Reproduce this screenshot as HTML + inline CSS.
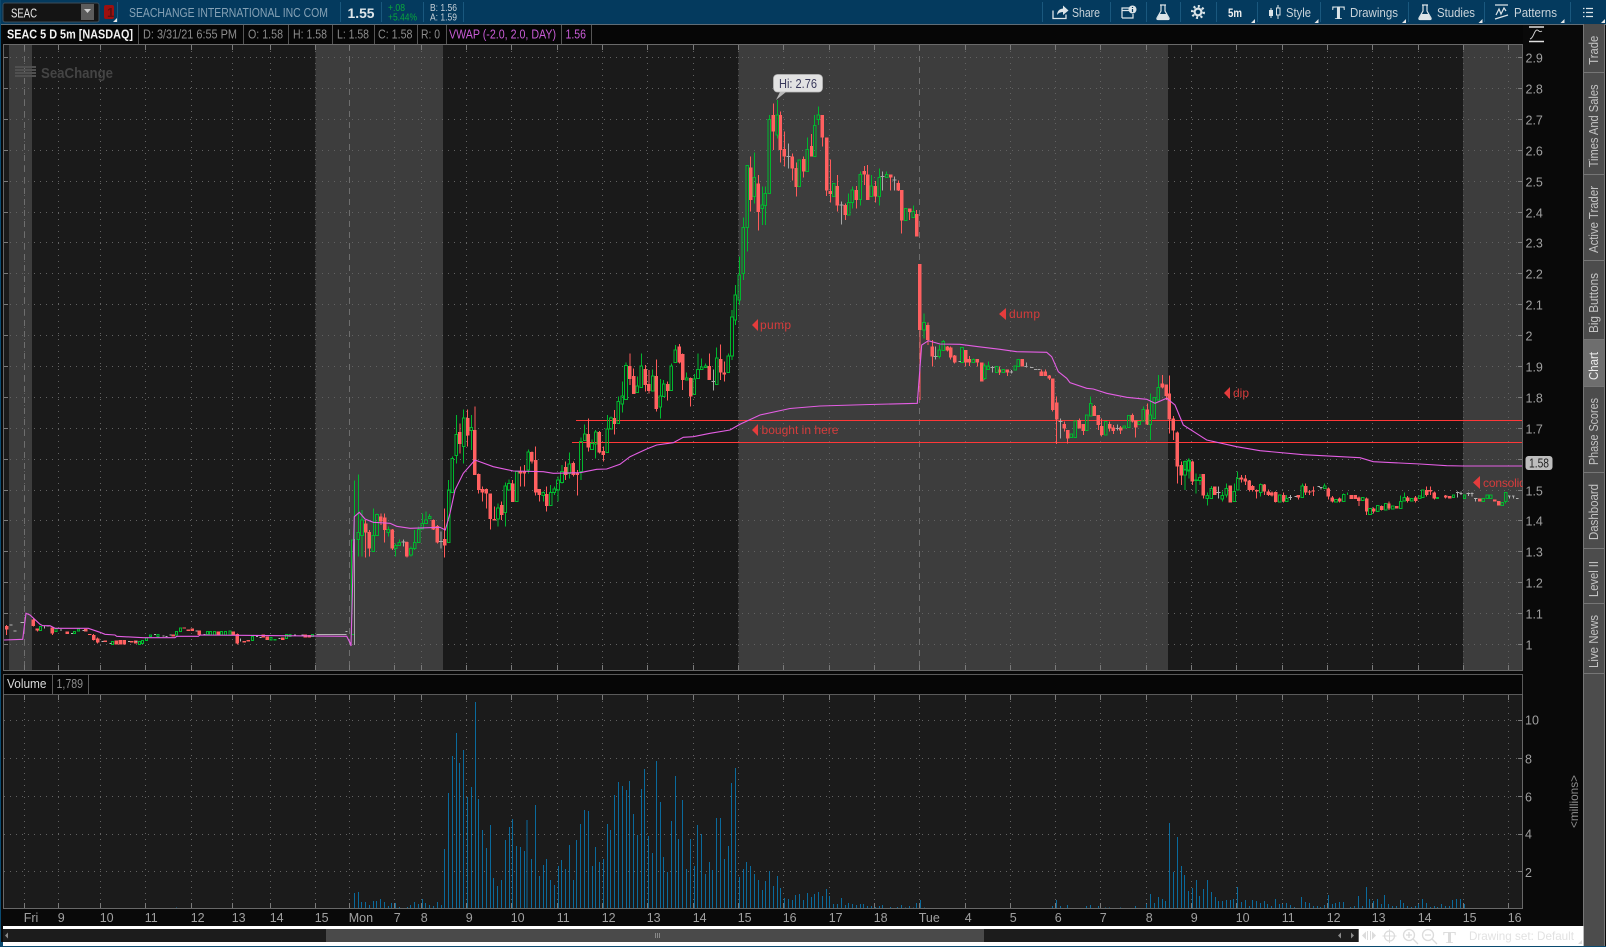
<!DOCTYPE html>
<html><head><meta charset="utf-8"><title>SEAC</title>
<style>
html,body{margin:0;padding:0;width:1606px;height:947px;overflow:hidden;background:#090909}
svg{display:block;position:absolute;left:0;top:0}
text{font-family:"Liberation Sans",sans-serif;font-size:12px}
.c{shape-rendering:crispEdges;fill:none}
.rw{stroke:#ff5a5a;stroke-width:3}.rb{stroke:#ff6060;stroke-width:10.5}
.gw{stroke:#00b82e;stroke-width:3}.ww{stroke:#b4b4b4;stroke-width:3}
.v{stroke:#0a6a9c;stroke-width:3;fill:none;shape-rendering:crispEdges}
.ax{fill:#a0a0a0;font-size:12.5px}.tb{fill:#c9d3da;font-size:12.5px}
.inf{fill:#8c8c8c;font-size:12.5px}.tab{fill:#c4c4c4;font-size:12.5px}
.an{fill:#d63c3c;font-size:12px}
</style></head><body>
<svg width="1606" height="947" viewBox="0 0 1606 947" xmlns="http://www.w3.org/2000/svg">
<defs><clipPath id="cp"><rect x="3" y="44" width="1519.5" height="626"/></clipPath></defs>
<rect width="1606" height="947" fill="#090909"/>
<!-- header -->
<rect width="1606" height="24" fill="#043a5e"/>
<rect y="24" width="1583" height="1" fill="#5f6d77"/>
<rect x="1583" y="24" width="23" height="1" fill="#5f6d77"/>
<rect x="0" y="0" width="1" height="947" fill="#0a4a70"/>
<rect x="3" y="3" width="96" height="19" rx="2" fill="#141414" stroke="#3c4c58"/>
<text x="11" y="17.5" textLength="26" lengthAdjust="spacingAndGlyphs" fill="#e8e8e8" style="font-size:13px">SEAC</text>
<rect x="81" y="4" width="13" height="16" fill="#5c5c5c"/>
<path d="M84 9h7l-3.500 4z" fill="#cfcfcf"/>
<rect x="104" y="5" width="10" height="14" rx="2" fill="#9c1010"/>
<text x="107" y="17" fill="#5c1010" style="font-size:13px;font-weight:bold">1</text>
<path d="M117 22l-4 0 4-4z" fill="#e8e8e8"/>
<path d="M117.500 2v20M340.500 2v20M381.500 2v20M423.500 2v20M463.500 2v20M1042.500 2v20M1110.500 2v20M1146.500 2v20M1180.500 2v20M1216.500 2v20M1257.500 2v20M1320.500 2v20M1408.500 2v20M1484.500 2v20M1570.500 2v20" stroke="#1a587e" class="c"/>
<text x="129" y="17" textLength="199" lengthAdjust="spacingAndGlyphs" fill="#86a2b6" style="font-size:12.500px">SEACHANGE INTERNATIONAL INC COM</text>
<text x="347.500" y="18" textLength="27" lengthAdjust="spacingAndGlyphs" fill="#dfe6ea" style="font-size:14px;font-weight:bold">1.55</text>
<text x="388" y="11" textLength="17" lengthAdjust="spacingAndGlyphs" fill="#0aa83c" style="font-size:10px">+.08</text>
<text x="388" y="20.500" textLength="29" lengthAdjust="spacingAndGlyphs" fill="#0aa83c" style="font-size:10.500px">+5.44%</text>
<text x="430" y="11" textLength="27" lengthAdjust="spacingAndGlyphs" fill="#c6d0d8" style="font-size:10px">B: 1.56</text>
<text x="430" y="20.500" textLength="27" lengthAdjust="spacingAndGlyphs" fill="#c6d0d8" style="font-size:10.500px">A: 1.59</text>
<!-- toolbar -->
<path d="M1053 10.500v8h13v-4" fill="none" stroke="#dce4e8" stroke-width="1.300"/>
<path d="M1057 15q.5-6 6-6.500v-3l5.500 5-5.500 4.500v-3q-4 0-6 3z" fill="#dce4e8"/>
<text x="1072" y="17" textLength="28" lengthAdjust="spacingAndGlyphs" class="tb">Share</text>
<path d="M1122 18v-10h9M1122 18h11v-4M1122 10.500h7" fill="none" stroke="#dce4e8" stroke-width="1.200"/>
<circle cx="1132.500" cy="9.500" r="4" fill="#dce4e8"/><path d="M1132.500 7v1M1132.500 9v3" stroke="#043a5e" stroke-width="1.200"/>
<path d="M1160 5h6M1161 5.500v5.500l-4 7q-.5 1.500 1 1.500h10q1.500 0 1-1.500l-4-7v-5.500" fill="none" stroke="#dce4e8" stroke-width="1.200"/><path d="M1159.500 14h7l2.500 5.500h-12z" fill="#dce4e8"/>
<circle cx="1198" cy="12" r="5.800" fill="none" stroke="#dce4e8" stroke-width="2.500" stroke-dasharray="2 2.500"/><circle cx="1198" cy="12" r="3.400" fill="none" stroke="#dce4e8" stroke-width="2.200"/>
<text x="1228" y="17" textLength="14" lengthAdjust="spacingAndGlyphs" fill="#f0f0f0" style="font-size:12px;font-weight:bold">5m</text>
<path d="M1271 8v10M1278 5v14" stroke="#dce4e8"/><rect x="1269" y="10" width="4" height="6" fill="#dce4e8"/><rect x="1276.500" y="8" width="3.500" height="7" fill="#043a5e" stroke="#dce4e8"/>
<text x="1286" y="17" textLength="25" lengthAdjust="spacingAndGlyphs" class="tb">Style</text>
<text x="1332" y="19" textLength="13" lengthAdjust="spacingAndGlyphs" fill="#dce4e8" style="font-family:'Liberation Serif',serif;font-size:19px;font-weight:bold">T</text>
<text x="1350" y="17" textLength="48" lengthAdjust="spacingAndGlyphs" class="tb">Drawings</text>
<path d="M1422 5h6M1423 5.500v5.500l-4 7q-.5 1.500 1 1.500h10q1.500 0 1-1.500l-4-7v-5.500" fill="none" stroke="#dce4e8" stroke-width="1.200"/><path d="M1421.500 14h7l2.500 5.500h-12z" fill="#dce4e8"/>
<text x="1437" y="17" textLength="38" lengthAdjust="spacingAndGlyphs" class="tb">Studies</text>
<path d="M1495 5h13M1496 15l3-6 2 5 3-6 2 3M1495 19l13-4" fill="none" stroke="#dce4e8" stroke-width="1.200"/>
<text x="1514" y="17" textLength="43" lengthAdjust="spacingAndGlyphs" class="tb">Patterns</text>
<path d="M1586 8.500h7M1586 12.500h7M1586 16.500h7M1583 8.500h1.500M1583 12.500h1.500M1583 16.500h1.500" stroke="#dce4e8" stroke-width="1.200"/>
<path d="M1255 23h-4l4-4zM1318.500 23h-4l4-4zM1406 23h-4l4-4zM1482.500 23h-4l4-4zM1564.500 23h-4l4-4zM1605 23h-4l4-4z" fill="#e8e8e8"/>
<!-- info bar -->
<rect x="3" y="25" width="1520" height="19" fill="#060606"/>
<text x="7" y="38.500" textLength="126" lengthAdjust="spacingAndGlyphs" fill="#f2f2f2" style="font-weight:bold;font-size:12.500px">SEAC 5 D 5m [NASDAQ]</text>
<text x="143" y="38.500" textLength="94" lengthAdjust="spacingAndGlyphs" class="inf">D: 3/31/21 6:55 PM</text>
<text x="248" y="38.500" textLength="35" lengthAdjust="spacingAndGlyphs" class="inf">O: 1.58</text>
<text x="293" y="38.500" textLength="34" lengthAdjust="spacingAndGlyphs" class="inf">H: 1.58</text>
<text x="337" y="38.500" textLength="32" lengthAdjust="spacingAndGlyphs" class="inf">L: 1.58</text>
<text x="378" y="38.500" textLength="34.500" lengthAdjust="spacingAndGlyphs" class="inf">C: 1.58</text>
<text x="421" y="38.500" textLength="19" lengthAdjust="spacingAndGlyphs" class="inf">R: 0</text>
<text x="449" y="38.500" textLength="107" lengthAdjust="spacingAndGlyphs" fill="#c95cd6" style="font-size:12.500px">VWAP (-2.0, 2.0, DAY)</text>
<text x="565.500" y="38.500" textLength="20.500" lengthAdjust="spacingAndGlyphs" fill="#c95cd6" style="font-size:12.500px">1.56</text>
<path d="M138.500 25v19M243.500 25v19M288.500 25v19M332.500 25v19M374.500 25v19M417.500 25v19M446.500 25v19M561.500 25v19M591.500 25v19" stroke="#555" class="c"/>
<rect x="3" y="44" width="1520" height="1" fill="#6a6a6a"/>
<!-- main chart bg -->
<rect x="3" y="45" width="1519.500" height="625" fill="#1a1a1a"/>
<path d="M9 45h23v625h-23zM315.500 45h127.500v625h-127.500zM738.500 45h429.500v625h-429.500zM1463 45h59.500v625h-59.500z" fill="#3d3d3d"/>
<!-- grid -->
<path class="c" stroke="#626262" stroke-dasharray="1 5" d="M24.500 45V670M58.500 45V670M100.500 45V670M145.500 45V670M191.500 45V670M232.500 45V670M270.500 45V670M315.500 45V670M394.500 45V670M421.500 45V670M466.500 45V670M511.500 45V670M557.500 45V670M602.500 45V670M647.500 45V670M693.500 45V670M738.500 45V670M783.500 45V670M829.500 45V670M874.500 45V670M965.500 45V670M1010.500 45V670M1055.500 45V670M1100.500 45V670M1146.500 45V670M1191.500 45V670M1236.500 45V670M1282.500 45V670M1327.500 45V670M1372.500 45V670M1418.500 45V670M1463.500 45V670M1508.500 45V670"/>
<path class="c" stroke="#626262" stroke-dasharray="1 5" d="M4 57.500H1518M4 88.500H1518M4 119.500H1518M4 150.500H1518M4 181.500H1518M4 212.500H1518M4 242.500H1518M4 273.500H1518M4 304.500H1518M4 335.500H1518M4 366.500H1518M4 397.500H1518M4 428.500H1518M4 459.500H1518M4 490.500H1518M4 520.500H1518M4 551.500H1518M4 582.500H1518M4 613.500H1518M4 644.500H1518"/>
<path class="c" stroke="#6e6e6e" stroke-dasharray="6 5" d="M24.500 45V670M349.500 45V670M919.500 45V670"/>
<path class="c" stroke="#7a7a7a" d="M24.500 45v5M58.500 45v5M100.500 45v5M145.500 45v5M191.500 45v5M232.500 45v5M270.500 45v5M315.500 45v5M349.500 45v5M394.500 45v5M421.500 45v5M466.500 45v5M511.500 45v5M557.500 45v5M602.500 45v5M647.500 45v5M693.500 45v5M738.500 45v5M783.500 45v5M829.500 45v5M874.500 45v5M919.500 45v5M965.500 45v5M1010.500 45v5M1055.500 45v5M1100.500 45v5M1146.500 45v5M1191.500 45v5M1236.500 45v5M1282.500 45v5M1327.500 45v5M1372.500 45v5M1418.500 45v5M1463.500 45v5M1508.500 45v5M24.500 665v5M58.500 665v5M100.500 665v5M145.500 665v5M191.500 665v5M232.500 665v5M270.500 665v5M315.500 665v5M349.500 665v5M394.500 665v5M421.500 665v5M466.500 665v5M511.500 665v5M557.500 665v5M602.500 665v5M647.500 665v5M693.500 665v5M738.500 665v5M783.500 665v5M829.500 665v5M874.500 665v5M919.500 665v5M965.500 665v5M1010.500 665v5M1055.500 665v5M1100.500 665v5M1146.500 665v5M1191.500 665v5M1236.500 665v5M1282.500 665v5M1327.500 665v5M1372.500 665v5M1418.500 665v5M1463.500 665v5M1508.500 665v5M3 57.500h5M3 88.500h5M3 119.500h5M3 150.500h5M3 181.500h5M3 212.500h5M3 242.500h5M3 273.500h5M3 304.500h5M3 335.500h5M3 366.500h5M3 397.500h5M3 428.500h5M3 459.500h5M3 490.500h5M3 520.500h5M3 551.500h5M3 582.500h5M3 613.500h5M3 644.500h5M1518 57.500h5M1518 88.500h5M1518 119.500h5M1518 150.500h5M1518 181.500h5M1518 212.500h5M1518 242.500h5M1518 273.500h5M1518 304.500h5M1518 335.500h5M1518 366.500h5M1518 397.500h5M1518 428.500h5M1518 459.500h5M1518 490.500h5M1518 520.500h5M1518 551.500h5M1518 582.500h5M1518 613.500h5M1518 644.500h5"/>
<path class="c" stroke="#666" d="M3.500 44V670.500H1522.500V44"/>
<!-- watermark -->
<path d="M15 67h21M15 70h21M15 73h21M15 76h21" stroke="#505050" stroke-width="2" class="c"/>
<text x="41" y="78" textLength="72" lengthAdjust="spacingAndGlyphs" fill="#444" style="font-size:15px;font-weight:bold">SeaChange</text>
<!-- red lines -->
<path class="c" stroke="#ff3838" d="M576 420.500H1522M572 442.500H1522"/>
<!-- candles: premarket -->
<g transform="translate(0 590) scale(.33333)">
<path class="c rw" d="M20 105V135M100 85V110M112 115V125M157 110V135M281 132V152M293 143V160M712 130V163"/>
<path class="c rb" d="M20 108V118M100 88V108M112 115V122M157 113V130M202 124V132M258 117V125M270 132V135M281 135V150M293 145V158M316 152V156M349 152V163M361 150V163M373 150V163M396 153V158M408 152V160M520 133V140M553 112V116M565 118V123M577 115V123M598 122V135M655 124V135M700 124V135M712 132V160M733 153V157M745 150V155M790 133V142M802 140V150M848 143V150M916 133V142M928 135V142"/>
<path class="c gw" d="M119 110h6V122h-6zM165 116h6V124h-6zM220 124h6V130h-6zM232 117h6V123h-6zM335 155h6V163h-6zM415 155h6V163h-6zM425 152h6V160h-6zM437 144h6V152h-6zM449 135h6V140h-6zM471 133h6V140h-6zM527 125h6V135h-6zM538 114h6V125h-6zM619 125h6V133h-6zM629 124h6V135h-6zM640 124h6V135h-6zM662 125h6V135h-6zM673 125h6V135h-6zM687 123h6V135h-6zM754 140h6V152h-6zM810 142h6V150h-6zM822 148h6V150h-6zM856 133h6V145h-6zM867 133h6V140h-6zM935 133h6V140h-6zM1055 134h9V-150h-9z"/>
<path class="c ww" d="M28 105h10M40 123h10M62 97h10M134 108V115M140 108h8M180 120h6M213 130h6M247 122h6M304 155h6M328 160h6M384 155h6M406 155h6M462 133h6M487 138h6M497 140h6M508 135h6M587 123h6M610 133h6M722 145V155M768 140h6M779 142h6M836 145h6M882 135h6M905 135h6M950 133H1040M1036 125h7"/>
</g>
<!-- Mon open through 15:00 -->
<g transform="translate(340 330) scale(.33333)">
<path class="c ww" d="M43 627V945M190 628V650M184 636h12M303 605V655M297 635h12M1120 118V182M1114 155h12" style="stroke:#a8a8a8"/>
<path class="c rw" d="M77 570V682M88 600V680M123 550V585M134 550V637M157 597V660M201 635V682M280 568V600M292 585V640M314 535V682M360 280V370M383 238V350M405 229V435M416 430V490M427 470V515M439 475V535M451 490V598M463 530V572M485 515V570M518 450V516M541 410V470M553 405V470M576 365V400M587 350V497M598 477V515M620 470V545M677 395V450M700 395V440M712 420V497M745 265V365M778 303V370M790 350V395M823 240V313M870 70V165M881 115V192M916 105V185M927 120V190M949 88V245M983 155V212M1018 42V100M1028 70V180M1052 142V230M1108 70V150M1142 43V150M1153 95V155"/>
<path class="c rb" d="M77 580V608M88 606V656M123 560V574M134 562V600M157 598V656M201 636V680M280 570V598M292 588V638M314 627V647M360 306V342M383 264V316M405 300V435M416 432V480M427 477V487M439 477V491M451 491V567M463 567V572M485 525V555M518 460V516M541 423V431M553 425V430M576 366V395M587 390V488M598 477V495M620 492V528M677 411V435M700 399V435M712 427V435M745 312V352M778 306V368M790 363V375M823 264V282M870 108V147M881 138V192M916 117V165M927 162V183M949 138V237M983 162V183M1018 50V98M1028 72V150M1052 144V200M1108 108V150M1142 87V128M1153 128V134"/>
<path class="c gw" d="M43 452V627M55 433V607M55 628V680M51 607h8V628h-8zM66 540V570M66 617V680M62 570h8V617h-8zM100 535V617M100 664V665M96 617h8V664h-8zM111 550V553M107 553h8V617h-8zM145 590V598M145 608V620M141 598h8V608h-8zM167 640V647M167 655V680M163 647h8V655h-8zM178 628V637M174 637h8V647h-8zM213 650V655M213 675V680M209 655h8V675h-8zM224 600V637M224 655V660M220 637h8V655h-8zM236 590V598M232 598h8V637h-8zM247 550V580M243 580h8V597h-8zM258 545V570M254 570h8V580h-8zM269 552V560M265 560h8V566h-8zM326 450V480M322 480h8V637h-8zM337 380V385M333 385h8V487h-8zM349 255V313M349 377V400M345 313h8V377h-8zM371 238V264M371 350V400M367 264h8V350h-8zM394 255V292M394 302V360M390 292h8V302h-8zM474 520V534M474 567V590M470 534h8V567h-8zM496 458V468M496 548V590M492 468h8V548h-8zM507 448V460M503 460h8V480h-8zM526 425h8V515h-8zM565 358V366M565 420V430M561 366h8V420h-8zM610 485V487M610 497V515M606 487h8V497h-8zM632 465V487M628 487h8V527h-8zM643 470V477M643 488V495M639 477h8V488h-8zM654 440V450M654 480V515M650 450h8V480h-8zM666 405V424M666 457V460M662 424h8V457h-8zM688 367V402M688 430V445M684 402h8V430h-8zM723 322V335M723 425V450M719 335h8V425h-8zM734 283V312M730 312h8V332h-8zM756 328V340M752 340h8V358h-8zM767 300V306M767 342V385M763 306h8V342h-8zM802 255V297M798 297h8V368h-8zM813 260V264M809 264h8V297h-8zM835 200V214M831 214h8V281h-8zM847 155V198M847 222V247M843 198h8V222h-8zM858 98V106M854 106h8V208h-8zM892 140V168M888 168h8V188h-8zM904 70V108M900 108h8V173h-8zM938 118V138M934 138h8V183h-8zM961 147V198M961 231V265M957 198h8V231h-8zM971 150V162M967 162h8V200h-8zM994 100V108M990 108h8V182h-8zM1006 45V60M1002 60h8V98h-8zM1040 128V144M1036 144h8V150h-8zM1063 132V147M1059 147h8V193h-8zM1074 70V118M1070 118h8V146h-8zM1085 85V111M1081 111h8V118h-8zM1097 100V108M1093 108h8V113h-8zM1130 52V84M1126 84h8V163h-8zM1165 70V78M1161 78h8V128h-8zM1176 -60V-39M1176 78V90M1172 78h8V-39h-8z"/>
</g>
<!-- high -->
<g transform="translate(700 60) scale(.33333)">
<path class="c ww" d="M265 250V325M259 290h12M424 425V493M418 435h12M548 335V392M542 350h12M583 350V392M577 360h12" style="stroke:#a8a8a8"/>
<path class="c rw" d="M152 290V455M175 345V512M220 130V270M241 155V308M253 215V320M277 280V362M289 307V410M311 290V352M335 222V290M367 165V260M380 232V408M391 298V428M412 345V455M436 430V480M469 378V445M493 318V375M503 315V420M526 363V428M572 343V392M595 362V393M605 390V520M629 445V480M650 450V530"/>
<path class="c rb" d="M152 323V420M175 370V456M220 165V215M241 165V270M253 267V290M277 289V326M289 324V381M311 297V335M335 258V290M367 165V233M380 232V392M391 393V402M412 378V437M436 435V465M469 390V420M493 333V343M503 343V420M526 378V410M572 343V353M595 369V392M605 390V482M629 445V456M650 462V530"/>
<path class="c gw" d="M106 675V705M106 780V795M102 705h8V780h-8zM118 590V645M118 720V735M114 645h8V720h-8zM130 472V502M130 640V660M126 502h8V640h-8zM142 575V502M138 316h8V502h-8zM163 277V352M163 410V430M159 352h8V410h-8zM187 380V435M187 446V495M183 435h8V446h-8zM196 380V400M196 437V495M192 400h8V437h-8zM208 165V178M204 178h8V400h-8zM232 120V165M232 225V235M228 165h8V225h-8zM298 298V300M294 300h8V380h-8zM322 232V268M318 268h8V335h-8zM344 165V196M340 196h8V290h-8zM355 140V165M355 178V195M351 165h8V178h-8zM397 370h8V410h-8zM446 400V427M442 427h8V465h-8zM457 380V390M457 428V445M453 390h8V428h-8zM481 335V343M481 418V437M477 343h8V418h-8zM514 345V378M510 378h8V410h-8zM538 325V352M538 410V437M534 352h8V410h-8zM560 335V343M556 343h8V352h-8zM613 445h8V482h-8zM640 437V455M636 455h8V472h-8z"/>
</g>
<!-- Tue -->
<g transform="translate(900 290) scale(.33333)">
<path class="c rw" d="M60 -78V330M84 97V165M97 150V230M142 168V185M152 170V208M164 195V220M197 180V230M208 198V228M232 207V230M245 218V275M298 230V255M322 238V258M367 207V230M424 238V258M436 238V258M448 255V270M458 265V365M470 320V462M493 395V425M503 420V460M538 385V415M550 402V435M583 345V378M595 375V420M605 385V440M629 395V425M640 405V432M662 408V432M697 370V397M707 392V442M742 340V405M787 255V295M799 283V330M808 256V430M820 378V450M832 425V530M844 515V540M877 515V540"/>
<path class="c rb" d="M60 -78V120M84 105V150M97 170V200M142 170V182M152 172V202M164 197V217M197 180V217M208 207V217M232 207V218M245 218V275M298 238V248M322 238V248M367 207V230M424 245V258M436 245V258M448 256V265M458 265V360M470 338V388M493 402V415M503 420V445M538 390V415M550 402V423M583 348V378M595 375V405M605 408V435M629 402V415M640 412V423M662 412V422M697 375V395M707 392V413M742 358V403M787 280V293M799 283V318M808 310V388M820 385V422M832 427V530M844 525V540M877 515V540"/>
<path class="c gw" d="M72 70V97M72 120V145M68 97h8V120h-8zM118 165V180M118 200V205M114 180h8V200h-8zM130 150V155M126 155h8V182h-8zM182 172h8V217h-8zM220 205V208M216 208h8V217h-8zM254 220V228M254 265V270M250 228h8V265h-8zM265 215V228M261 228h8V238h-8zM286 230h8V248h-8zM306 238h8V248h-8zM342 228h8V240h-8zM351 208h8V230h-8zM510 432h8V443h-8zM522 393h8V443h-8zM556 375h8V422h-8zM568 340h8V378h-8zM572 320V340M613 395h8V435h-8zM669 408h8V414h-8zM682 377h8V413h-8zM714 395h8V403h-8zM726 358h8V393h-8zM730 350V358M747 375h8V403h-8zM751 310V375M751 403V450M759 322h8V385h-8zM771 292h8V330h-8zM775 255V292M851 515h8V540h-8zM861 513h8V540h-8zM865 505V513"/>
<path class="c ww" d="M106 170V208M100 200h12M175 215h8M277 228V248M271 232h12M335 240V250M329 246h10M379 218V232M373 230h10M390 232h10M402 238h10M414 238h8M481 385V445M475 395h12M652 403V422M646 415h12" style="stroke:#a8a8a8"/>
</g>
<!-- after dip -->
<g transform="translate(1160 440) scale(.33333)">
<path class="c rw" d="M52 0V130M64 65V135M97 62V135M130 102V175M211 137V187M244 105V128M256 105V135M268 120V155M278 135V155M290 148V175M313 132V165M325 148V168M336 155V170M347 155V187M371 158V187M415 165V178M437 130V165M449 150V165M460 140V168M505 143V178M517 168V187M539 173V187M597 170V198M620 172V225M641 203V220M665 197V212M687 185V210M743 168V187M767 168V187M800 140V170M811 140V165M823 155V178M857 165V175"/>
<path class="c rb" d="M52 0V80M64 78V107M97 67V125M130 102V167M165 140V165M211 137V187M244 112V118M256 115V125M268 122V150M278 138V150M290 150V155M313 133V155M325 155V165M336 158V167M347 156V186M371 165V185M415 165V172M437 138V158M449 155V157M460 152V154M505 145V170M517 172V185M539 175V185M574 165V177M586 165V177M597 172V183M620 175V215M641 205V215M665 198V210M687 190V205M710 198V205M743 172V183M767 172V183M800 150V165M811 150V155M823 157V175M857 166V172M869 168V175M959 175V185M1004 178V185M1016 183V197"/>
<path class="c gw" d="M75 62V88M75 105V150M71 88h8V105h-8zM87 55V62M87 93V115M83 62h8V93h-8zM108 100V120M108 122V160M104 120h8V122h-8zM120 102V112M120 122V135M116 112h8V122h-8zM142 158V166M142 176V197M138 166h8V176h-8zM154 138V145M150 145h8V176h-8zM187 155V167M187 177V185M183 167h8V177h-8zM199 130V145M199 165V172M195 145h8V165h-8zM223 130V155M219 155h8V185h-8zM233 95V115M229 115h8V150h-8zM302 130V133M302 157V170M298 133h8V157h-8zM359 163V165M355 165h8V186h-8zM380 165V175M376 175h8V185h-8zM427 130V138M423 138h8V172h-8zM494 130V138M490 138h8V146h-8zM524 178h8V186h-8zM551 160V163M547 163h8V185h-8zM562 158V165M604 172h8V182h-8zM626 205h8V223h-8zM653 197V195M649 197h8V215h-8zM673 190h8V210h-8zM694 198h8V207h-8zM718 185h8V205h-8zM722 167V185M729 172h8V183h-8zM733 158V172M751 175h8V183h-8zM775 168h8V175h-8zM784 150h8V173h-8zM830 172h6V175h-6zM878 165h6V173h-6zM911 165h6V175h-6zM966 175h8V185h-8zM978 165h8V175h-8zM988 165h8V175h-8zM1023 188h8V197h-8zM1033 157h8V185h-8zM1037 185V190"/>
<path class="c ww" d="M176 140V175M170 158h12M391 165V180M386 172h10M403 170h8M472 140h8M483 142V148M478 142h10M893 155V172M888 158h10M903 155V165M898 160h10M925 157V168M920 160h10M936 157V170M931 160h10M947 175V185M942 175h10M1048 168V175M1044 168h8M1060 168V175M1056 168h8M1068 175h8" style="stroke:#b0b0b0"/>
</g>
<!-- VWAP -->
<polyline fill="none" stroke="#e45ee4" stroke-width="1.100" points="4,640 22.700,639.300 26,613.300 30,615 40,624.300 42.700,625.700 50,625.700 55,628.300 88.300,628.300 100,632.300 105,634.300 115,635 116.700,636.300 143.300,637.700 175,637.700 176.700,636.300 198.300,636.300 200,635 346.700,636.300 350,642.700 351,646 354.300,516.700 359.300,512.300 365,519 373.300,522.300 390,523.300 396.700,526.300 410,528.300 440,527.300 445.300,530 450,513.300 455,490 463.300,473.300 475,460 493.300,466.700 513.300,471 543.300,471.700 553.300,473.300 580,472.700 596.700,469.300 606.700,469 620,464.300 630,456.700 646.700,449 656.700,445 673.300,442.700 683.300,437.300 693.300,436.700 710,433.300 730,430 740,424.300 760,415 790,408.500 820,406 870,404.500 917.300,403.300 921.700,345 928.300,340.700 940,344 960,344.300 978.300,346.700 1000,349.300 1016.700,351.700 1046.700,352.300 1051.700,356.700 1058.300,371.700 1066.700,378.300 1070,382.700 1086.700,388.300 1093.300,389 1106.700,393.300 1126.700,397.300 1146.700,399.300 1155,403.300 1166.700,398.300 1175,405 1183.300,425 1200,435.700 1206.700,440 1236.700,446.700 1260,450.700 1303.300,454.700 1360,457.700 1373.300,461.700 1420,464 1446.700,465.700 1463.300,466 1522,466"/>
<!-- annotations -->
<g clip-path="url(#cp)">
<path d="M758 319v12l-6-6zM1006 308v12l-7-6zM758 424v12l-6-6zM1230 387v12l-6-6zM1480 476v13l-7-6.500z" fill="#e53c3c"/>
<text x="760" y="329" class="an" textLength="31" lengthAdjust="spacing">pump</text>
<text x="1009" y="318" class="an" textLength="31" lengthAdjust="spacing">dump</text>
<text x="761.500" y="434" class="an" textLength="77" lengthAdjust="spacingAndGlyphs">bought in here</text>
<text x="1233" y="397" class="an" textLength="16" lengthAdjust="spacing">dip</text>
<text x="1483" y="487" class="an" textLength="68" lengthAdjust="spacing">consolidation</text>
</g>
<!-- Hi bubble -->
<path d="M776 100l4-8h6z" fill="#b8b8b8"/>
<rect x="773.500" y="74.500" width="49" height="17.500" rx="4" fill="#e2e2e2" stroke="#bbb" stroke-width=".7"/>
<text x="779" y="88" textLength="38" lengthAdjust="spacingAndGlyphs" fill="#38385a" style="font-size:12.500px">Hi: 2.76</text>
<!-- price axis -->
<path d="M1529 27h15M1529 41.500h15" stroke="#e0e0e0" stroke-width="1.600"/>
<path d="M1530 39c4-1 4-9 7-9 2 0 2 3 5 1" stroke="#d0d0d0" fill="none"/>
<g>
<text class="ax" x="1525.500" y="62.500">2.9</text><text class="ax" x="1525.500" y="93.500">2.8</text><text class="ax" x="1525.500" y="124.500">2.7</text><text class="ax" x="1525.500" y="155.500">2.6</text><text class="ax" x="1525.500" y="186.500">2.5</text><text class="ax" x="1525.500" y="217.500">2.4</text><text class="ax" x="1525.500" y="247.500">2.3</text><text class="ax" x="1525.500" y="278.500">2.2</text><text class="ax" x="1525.500" y="309.500">2.1</text><text class="ax" x="1525.500" y="340.500">2</text><text class="ax" x="1525.500" y="371.500">1.9</text><text class="ax" x="1525.500" y="402.500">1.8</text><text class="ax" x="1525.500" y="433.500">1.7</text><text class="ax" x="1525.500" y="495.500">1.5</text><text class="ax" x="1525.500" y="525.500">1.4</text><text class="ax" x="1525.500" y="556.500">1.3</text><text class="ax" x="1525.500" y="587.500">1.2</text><text class="ax" x="1525.500" y="618.500">1.1</text><text class="ax" x="1525.500" y="649.500">1</text>
</g>
<rect x="1525.500" y="456" width="27" height="14" rx="3" fill="#bdbdbd"/>
<text x="1529" y="467.500" textLength="20" lengthAdjust="spacingAndGlyphs" fill="#222" style="font-size:12.500px">1.58</text>
<!-- tabs -->
<rect x="1583.500" y="24" width="20.500" height="923" fill="#4c4c4c"/>
<rect x="1583.500" y="340" width="20.500" height="46" fill="#6e6e6e"/>
<path class="c" stroke="#767676" d="M1583.500 72.500h20.500M1583.500 174.500h20.500M1583.500 260.500h20.500M1583.500 339.500h20.500M1583.500 386.500h20.500M1583.500 472.500h20.500M1583.500 548.500h20.500M1583.500 603.500h20.500M1583.500 673.500h20.500M1583.500 24v923M1604.500 24v923"/>
<text class="tab" transform="translate(1598 64.700) rotate(-90)" textLength="29" lengthAdjust="spacingAndGlyphs">Trade</text>
<text class="tab" transform="translate(1598 167.400) rotate(-90)" textLength="83" lengthAdjust="spacingAndGlyphs">Times And Sales</text>
<text class="tab" transform="translate(1598 253) rotate(-90)" textLength="67" lengthAdjust="spacingAndGlyphs">Active Trader</text>
<text class="tab" transform="translate(1598 333) rotate(-90)" textLength="60" lengthAdjust="spacingAndGlyphs">Big Buttons</text>
<text class="tab" transform="translate(1598 380) rotate(-90)" textLength="28" lengthAdjust="spacingAndGlyphs" style="fill:#eee">Chart</text>
<text class="tab" transform="translate(1598 465) rotate(-90)" textLength="67" lengthAdjust="spacingAndGlyphs">Phase Scores</text>
<text class="tab" transform="translate(1598 540) rotate(-90)" textLength="56" lengthAdjust="spacingAndGlyphs">Dashboard</text>
<text class="tab" transform="translate(1598 597) rotate(-90)" textLength="36" lengthAdjust="spacingAndGlyphs">Level II</text>
<text class="tab" transform="translate(1598 668) rotate(-90)" textLength="53" lengthAdjust="spacingAndGlyphs">Live News</text>
<!-- volume panel -->
<rect x="3" y="674" width="1520" height="20" fill="#060606"/>
<path class="c" stroke="#5a5a5a" d="M3 674.500H1522.500M3 694.500H1522.500M3.500 674V694M52.500 674V694M88.500 674V694M1522.500 674V694"/>
<text x="7" y="688" textLength="39.500" lengthAdjust="spacingAndGlyphs" fill="#d8d8d8" style="font-size:12.500px">Volume</text>
<text x="56.500" y="688" textLength="26.500" lengthAdjust="spacingAndGlyphs" class="inf">1,789</text>
<rect x="3.500" y="695" width="1519" height="213" fill="#1b1b1b"/>
<path class="c" stroke="#626262" stroke-dasharray="1 5" d="M24.500 695V908M58.500 695V908M100.500 695V908M145.500 695V908M191.500 695V908M232.500 695V908M270.500 695V908M315.500 695V908M349.500 695V908M394.500 695V908M421.500 695V908M466.500 695V908M511.500 695V908M557.500 695V908M602.500 695V908M647.500 695V908M693.500 695V908M738.500 695V908M783.500 695V908M829.500 695V908M874.500 695V908M919.500 695V908M965.500 695V908M1010.500 695V908M1055.500 695V908M1100.500 695V908M1146.500 695V908M1191.500 695V908M1236.500 695V908M1282.500 695V908M1327.500 695V908M1372.500 695V908M1418.500 695V908M1463.500 695V908M1508.500 695V908M4 720.500H1518M4 758.500H1518M4 796.500H1518M4 834.500H1518M4 871.500H1518"/>
<path class="c" stroke="#7a7a7a" d="M24.500 695v5M58.500 695v5M100.500 695v5M145.500 695v5M191.500 695v5M232.500 695v5M270.500 695v5M315.500 695v5M349.500 695v5M394.500 695v5M421.500 695v5M466.500 695v5M511.500 695v5M557.500 695v5M602.500 695v5M647.500 695v5M693.500 695v5M738.500 695v5M783.500 695v5M829.500 695v5M874.500 695v5M919.500 695v5M965.500 695v5M1010.500 695v5M1055.500 695v5M1100.500 695v5M1146.500 695v5M1191.500 695v5M1236.500 695v5M1282.500 695v5M1327.500 695v5M1372.500 695v5M1418.500 695v5M1463.500 695v5M1508.500 695v5M24.500 903v5M58.500 903v5M100.500 903v5M145.500 903v5M191.500 903v5M232.500 903v5M270.500 903v5M315.500 903v5M349.500 903v5M394.500 903v5M421.500 903v5M466.500 903v5M511.500 903v5M557.500 903v5M602.500 903v5M647.500 903v5M693.500 903v5M738.500 903v5M783.500 903v5M829.500 903v5M874.500 903v5M919.500 903v5M965.500 903v5M1010.500 903v5M1055.500 903v5M1100.500 903v5M1146.500 903v5M1191.500 903v5M1236.500 903v5M1282.500 903v5M1327.500 903v5M1372.500 903v5M1418.500 903v5M1463.500 903v5M1508.500 903v5M1518 720.500h5M1518 758.500h5M1518 796.500h5M1518 834.500h5M1518 871.500h5"/>
<g transform="translate(0 660) scale(.33333)"><path class="v" d="M529 745V742M1063 745V699M1075 745V696M1084 745V726M1096 745V726M1108 745V735M1120 745V723M1130 745V723M1141 745V717M1153 745V726M1165 745V738M1175 745V729M1186 745V729M1198 745V741M1222 745V741M1231 745V735M1243 745V726M1255 745V732M1267 745V717M1276 745V729M1288 745V735M1300 745V738M1312 745V726M1324 745V735"/></g>
<g transform="translate(400 680) scale(.33333)"><path class="v" d="M133 684V507M145 684V339M157 684V228M169 684V159M178 684V249M190 684V210M202 684V351M214 684V321M226 684V66M235 684V357M248 684V450M259 684V504M271 684V435M280 684V594M292 684V618M304 684V600M316 684V480M328 684V441M337 684V417M349 684V498M361 684V501M373 684V513M381 684V420M394 684V537M406 684V375M418 684V588M430 684V555M439 684V537M451 684V600M463 684V615M475 684V558M484 684V540M496 684V567M508 684V495M520 684V600M529 684V480M541 684V432M553 684V390M565 684V393M577 684V558M586 684V501M598 684V546M610 684V537M622 684V432M631 684V450M643 684V345M655 684V306M667 684V318M679 684V330M688 684V303M700 684V402M712 684V465M724 684V327M733 684V267M745 684V468M757 684V519M769 684V243M781 684V366M790 684V531M802 684V576M814 684V423M826 684V288M835 684V477M847 684V360M859 684V567M871 684V477M883 684V558M892 684V435M904 684V462M916 684V582M928 684V546M937 684V570M949 684V414M961 684V414M973 684V537M985 684V498M994 684V309M1006 684V264M1018 684V591M1030 684V567M1039 684V546M1051 684V558M1063 684V582M1075 684V600M1087 684V630M1096 684V603M1108 684V573M1120 684V618M1132 684V588M1141 684V624M1153 684V654M1165 684V657M1177 684V660M1186 684V645M1198 684V642"/></g>
<g transform="translate(790 840) scale(.33333)"><path class="v" d="M7 205V180M16 205V165M28 205V162M40 205V180M52 205V159M64 205V171M73 205V162M85 205V156M97 205V168M109 205V147M118 205V168M130 205V192M142 205V192M154 205V174M166 205V195M175 205V189M187 205V192M199 205V195M211 205V192M220 205V192M232 205V198M244 205V198M256 205V201M268 205V198M277 205V195M301 205V201M322 205V201M334 205V195M346 205V202M358 205V198M370 205V202M379 205V189M391 205V180M403 205V202M787 205V198M799 205V180M811 205V198M832 205V195M889 205V198M901 205V195M925 205V198M946 205V202M958 205V202M991 205V202"/></g>
<g transform="translate(1106 760) scale(.33333)"><path class="v" d="M43 445V442M88 445V438M121 445V432M133 445V402M145 445V429M157 445V411M169 445V417M178 445V423M190 445V189M202 445V336M214 445V231M226 445V318M235 445V345M248 445V393M259 445V384M271 445V360M280 445V408M292 445V387M304 445V360M316 445V396M328 445V411M337 445V423M349 445V423M361 445V420M373 445V420M382 445V417M394 445V381M406 445V426M418 445V420M430 445V438M439 445V420M451 445V423M463 445V429M475 445V423M484 445V432M496 445V438M508 445V417M520 445V432M529 445V432M541 445V429M553 445V435M565 445V441M586 445V411M598 445V426M610 445V429M622 445V438M634 445V438M643 445V441M655 445V435M667 445V405M679 445V432M688 445V429M700 445V426M712 445V426M733 445V441M745 445V438M757 445V408M769 445V438M781 445V381M790 445V417M802 445V423M814 445V417M826 445V432M835 445V405M847 445V432M859 445V438M871 445V438M883 445V420M892 445V429M904 445V438M916 445V441M928 445V438M937 445V432M949 445V417M961 445V429M973 445V441M985 445V438M994 445V441M1006 445V432M1018 445V438M1030 445V438M1039 445V420M1051 445V417M1063 445V417M1075 445V432"/></g>
<path class="c" stroke="#686868" d="M3.500 694V908.500H1522.500V694"/>
<text class="ax" x="1525" y="724.500">10</text><text class="ax" x="1525" y="763.500">8</text><text class="ax" x="1525" y="801.500">6</text><text class="ax" x="1525" y="838.500">4</text><text class="ax" x="1525" y="877">2</text>
<text transform="translate(1578 828) rotate(-90)" textLength="53" lengthAdjust="spacingAndGlyphs" fill="#8c8c8c" style="font-size:12px">&lt;millions&gt;</text>
<!-- time axis -->
<g transform="translate(-.8 0)">
<text class="ax" x="24.500" y="922">Fri</text><text class="ax" x="58.500" y="922">9</text><text class="ax" x="100.500" y="922">10</text><text class="ax" x="145.500" y="922">11</text><text class="ax" x="191.500" y="922">12</text><text class="ax" x="232.500" y="922">13</text><text class="ax" x="270.500" y="922">14</text><text class="ax" x="315.500" y="922">15</text><text class="ax" x="349.500" y="922">Mon</text><text class="ax" x="394.500" y="922">7</text><text class="ax" x="421.500" y="922">8</text><text class="ax" x="466.500" y="922">9</text><text class="ax" x="511.500" y="922">10</text><text class="ax" x="557.500" y="922">11</text><text class="ax" x="602.500" y="922">12</text><text class="ax" x="647.500" y="922">13</text><text class="ax" x="693.500" y="922">14</text><text class="ax" x="738.500" y="922">15</text><text class="ax" x="783.500" y="922">16</text><text class="ax" x="829.500" y="922">17</text><text class="ax" x="874.500" y="922">18</text><text class="ax" x="919.500" y="922">Tue</text><text class="ax" x="965.500" y="922">4</text><text class="ax" x="1010.500" y="922">5</text><text class="ax" x="1055.500" y="922">6</text><text class="ax" x="1100.500" y="922">7</text><text class="ax" x="1146.500" y="922">8</text><text class="ax" x="1191.500" y="922">9</text><text class="ax" x="1236.500" y="922">10</text><text class="ax" x="1282.500" y="922">11</text><text class="ax" x="1327.500" y="922">12</text><text class="ax" x="1372.500" y="922">13</text><text class="ax" x="1418.500" y="922">14</text><text class="ax" x="1463.500" y="922">15</text><text class="ax" x="1508.500" y="922">16</text>
</g>
<!-- scrollbar strip -->
<rect x="3" y="926" width="1580.500" height="20" fill="#fff"/>
<rect x="1" y="946" width="1605" height="1" fill="#0a4a70"/>
<rect x="0" y="942" width="3" height="5" fill="#0a4a70"/>
<rect x="3" y="929" width="1355.700" height="13" fill="#1c1c1c"/>
<rect x="326" y="929" width="658" height="13" fill="#4a4a4a"/>
<path d="M655 933h1v5h-1zM657 933h1v5h-1zM659 933h1v5h-1z" fill="#888"/>
<path d="M5 935.500l3-3v6zM1341 932.500v6l-3-3zM1351 932.500v6l3-3z" fill="#8a8a8a"/>
<path d="M1362 935.500l4-4v8zM1376 935.500l-4-4v8z" fill="#dcdcdc"/><path d="M1367.500 931v9M1370.500 931v9" stroke="#dcdcdc"/>
<circle cx="1389.500" cy="936" r="5" fill="none" stroke="#dcdcdc" stroke-width="1.200"/><path d="M1389.500 929v14M1382.500 936h14" stroke="#dcdcdc"/>
<circle cx="1409" cy="935" r="5.500" fill="none" stroke="#dcdcdc" stroke-width="1.300"/><path d="M1406 935h6M1409 932v6M1413 939l5 5" stroke="#dcdcdc" stroke-width="1.300"/>
<circle cx="1428" cy="935" r="5.500" fill="none" stroke="#dcdcdc" stroke-width="1.300"/><path d="M1425 935h6M1432 939l5 5" stroke="#dcdcdc" stroke-width="1.300"/>
<text x="1443" y="943" textLength="13" lengthAdjust="spacingAndGlyphs" fill="#dcdcdc" style="font-family:'Liberation Serif',serif;font-size:17px;font-weight:bold">T</text>
<text x="1469" y="940" textLength="105" lengthAdjust="spacingAndGlyphs" fill="#e2e2e2" style="font-size:12px">Drawing set: Default</text>
<path d="M1582 944h-4l4-4z" fill="#ddd"/>
</svg>
</body></html>
